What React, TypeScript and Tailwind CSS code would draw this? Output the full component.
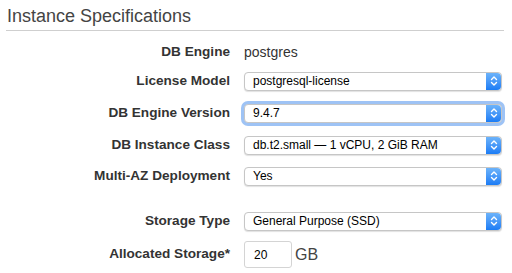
const Arrows = () => (
  <div className="w-[15px] self-stretch rounded-r-[4px] bg-gradient-to-b from-[#6cb3fa] to-[#1a7cf5] flex items-center justify-center">
    <svg width="8" height="12" viewBox="0 0 8 12" fill="none" stroke="white" strokeWidth="1.4" strokeLinecap="round" strokeLinejoin="round">
      <path d="M1.5 4.5 L4 2 L6.5 4.5" />
      <path d="M1.5 7.5 L4 10 L6.5 7.5" />
    </svg>
  </div>
);

const Select = ({ value, focused }: { value: string; focused?: boolean }) => (
  <div
    className={
      "w-[258px] h-[19px] flex items-stretch bg-white rounded-[4px] border border-[#c6c6c6] shadow-[0_1px_1px_rgba(0,0,0,0.12)] " +
      (focused ? "ring-[3px] ring-[#9ec3f5]" : "")
    }
  >
    <div className="flex-1 flex items-center pl-[8px] text-[12px] text-black">{value}</div>
    <Arrows />
  </div>
);

const Label = ({ children }: { children: string }) => (
  <div className="w-[230px] text-right font-bold text-[13.6px] text-[#333]">{children}</div>
);

export default function App() {
  return (
    <div className="w-[512px] h-[273px] bg-white overflow-hidden" style={{ fontFamily: '"Liberation Sans", Arial, sans-serif' }}>
      <div className="px-[7px] pt-[5px]">
        <h1 className="text-[18px] leading-[22px] text-[#444]">Instance Specifications</h1>
      </div>
      <div className="mx-[6px] mt-[3px] mr-[8px] h-px bg-[#cfcfcf]" />
      <div className="flex flex-col">
        <div className="mt-[11px] h-[20px] flex items-center gap-[14px]">
          <Label>DB Engine</Label>
          <div className="text-[14px] text-[#333]">postgres</div>
        </div>
        <div className="mt-[9px] h-[20px] flex items-center gap-[14px]">
          <Label>License Model</Label>
          <Select value="postgresql-license" />
        </div>
        <div className="mt-[12px] h-[20px] flex items-center gap-[14px]">
          <Label>DB Engine Version</Label>
          <Select value="9.4.7" focused />
        </div>
        <div className="mt-[12px] h-[20px] flex items-center gap-[14px]">
          <Label>DB Instance Class</Label>
          <Select value="db.t2.small — 1 vCPU, 2 GiB RAM" />
        </div>
        <div className="mt-[11px] h-[20px] flex items-center gap-[14px]">
          <Label>Multi-AZ Deployment</Label>
          <Select value="Yes" />
        </div>
        <div className="mt-[25px] h-[20px] flex items-center gap-[14px]">
          <Label>Storage Type</Label>
          <Select value="General Purpose (SSD)" />
        </div>
        <div className="mt-[10px] h-[27px] flex items-center gap-[14px]">
          <Label>Allocated Storage*</Label>
          <div className="flex items-center gap-[3px]">
            <div className="w-[48px] h-[27px] border border-[#d4d4d4] rounded-[3px] flex items-center pl-[9px] text-[12px] text-black">20</div>
            <span className="text-[16px] text-[#444]">GB</span>
          </div>
        </div>
      </div>
    </div>
  );
}
